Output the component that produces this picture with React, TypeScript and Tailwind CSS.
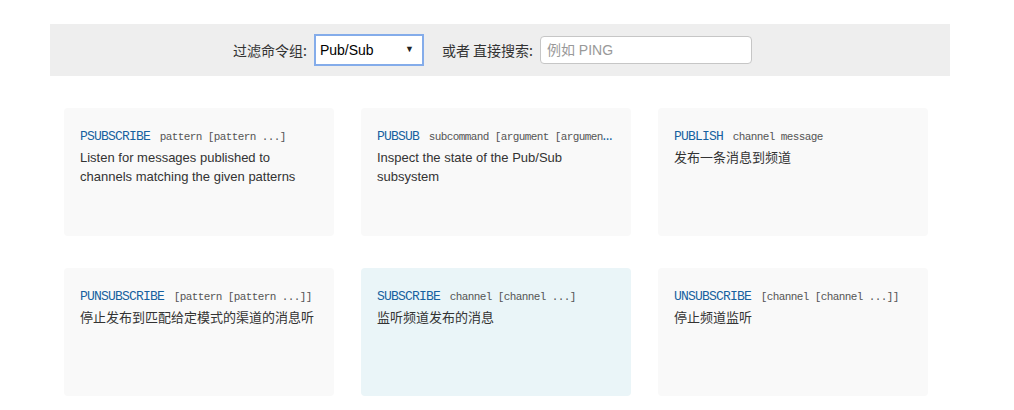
import React from "react";

const cmds = [
  { name: "PSUBSCRIBE", args: "pattern [pattern ...]", desc: "Listen for messages published to channels matching the given patterns" },
  { name: "PUBSUB", args: "subcommand [argument [argument ...]]", desc: "Inspect the state of the Pub/Sub subsystem" },
  { name: "PUBLISH", args: "channel message", desc: "发布一条消息到频道" },
  { name: "PUNSUBSCRIBE", args: "[pattern [pattern ...]]", desc: "停止发布到匹配给定模式的渠道的消息听" },
  { name: "SUBSCRIBE", args: "channel [channel ...]", desc: "监听频道发布的消息", hl: true },
  { name: "UNSUBSCRIBE", args: "[channel [channel ...]]", desc: "停止频道监听" },
];

const sans = "font-['Liberation_Sans','Noto_Sans_CJK_SC',sans-serif]";

export default function App() {
  return (
    <div className={`w-[1014px] h-[410px] bg-white overflow-hidden ${sans}`}>
      <div className="pt-6 pl-[50px]">
        <div className="w-[900px] h-[52px] bg-[#eeeeee] flex items-center pl-[183px] text-[14px] text-[#333]">
          <span className="font-['Noto_Sans_CJK_SC','Liberation_Sans',sans-serif] text-[14px]">过滤命令组:</span>
          <div className="ml-[7px] w-[110px] h-[32px] border-2 border-[#84acea] bg-white flex items-center justify-between pl-[4px] pr-[8px] text-black text-[14px]">
            <span>Pub/Sub</span>
            <span className="text-[9px] text-[#222]">▼</span>
          </div>
          <span className="ml-[18px] font-['Noto_Sans_CJK_SC','Liberation_Sans',sans-serif] text-[14px]">或者 直接搜索:</span>
          <div className="ml-[7px] w-[212px] h-[28px] border border-[#c6c6c6] rounded-[4px] bg-white flex items-center pl-[6px] text-[14px] text-[#999]">
            例如 PING
          </div>
        </div>
      </div>
      <div className="pl-[64px] pt-[32px] grid grid-cols-[270px_270px_270px] gap-x-[27px] gap-y-[32px]">
        {cmds.map((c) => (
          <div
            key={c.name}
            className={`h-[128px] rounded-[4px] pt-[18px] px-4 ${c.hl ? "bg-[#eaf5f8]" : "bg-[#f9f9f9]"}`}
          >
            <div className="h-[20px] leading-[20px] whitespace-nowrap overflow-hidden text-ellipsis text-[#17619f] font-['Liberation_Mono',monospace]">
              <span className="text-[13px] tracking-[-0.8px]">{c.name}</span>{" "}
              <span className="text-[11px] tracking-[-0.6px] text-[#555]">{c.args}</span>
            </div>
            <div className="mt-[2px] text-[13px] leading-[19px] text-[#333]">{c.desc}</div>
          </div>
        ))}
      </div>
    </div>
  );
}
